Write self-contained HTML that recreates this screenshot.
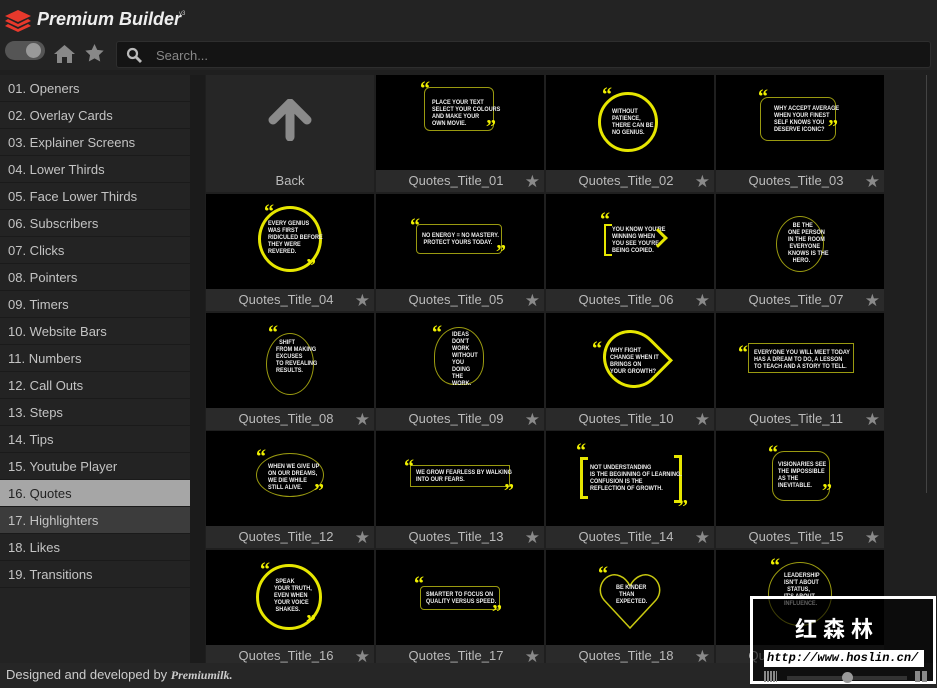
<!DOCTYPE html>
<html><head><meta charset="utf-8"><style>
*{margin:0;padding:0;box-sizing:border-box}
body{width:937px;height:688px;background:#1f1f1f;font-family:"Liberation Sans",sans-serif;position:relative;overflow:hidden;color:#ccc}
.hdr{position:absolute;left:0;top:0;width:937px;height:70px;background:#232323}
.title{position:absolute;left:37px;top:9px;font-size:18px;font-weight:bold;font-style:italic;color:#eee}
.ver{position:absolute;left:179px;top:11px;font-size:6px;color:#ccc}
.tog{position:absolute;left:5px;top:41px;width:40px;height:19px;border-radius:10px;background:#555}
.tog i{position:absolute;right:4px;top:2px;width:15px;height:15px;border-radius:50%;background:#999}
.search{position:absolute;left:116px;top:41px;width:815px;height:27px;background:#141414;border:1px solid #2e2e2e;border-radius:3px}
.search span{position:absolute;left:39px;top:6px;font-size:13px;color:#888}
.side{position:absolute;left:0;top:75px;width:190px;height:588px;background:#232323}
.side div{height:27px;border-bottom:1px solid #1a1a1a;font-size:13px;line-height:27px;padding-left:8px;color:#c4c4c4}
.side .sel{background:#a6a6a6;color:#222}
.side .h{background:#3c3c3c}
.scr{position:absolute;left:190px;top:75px;width:15px;height:588px;background:#1b1b1b}
.cell{position:absolute;width:168px;height:117px;background:#2a2a2a}
.img{position:absolute;left:0;top:0;width:168px;height:95px;background:#000;overflow:hidden}
.lbl{position:absolute;left:0;top:95px;width:168px;height:22px;background:#2a2a2a;font-size:13px;line-height:22px;text-align:center;color:#bbb;padding-right:8px}
.lbl b{position:absolute;right:4px;top:1px;color:#8a8a8a;font-size:17px;font-weight:normal}
.q{position:absolute;font-family:"Liberation Sans Narrow","Liberation Sans",sans-serif;font-weight:bold;font-size:6.5px;line-height:7px;color:#eee;white-space:nowrap;transform:scaleX(.85);transform-origin:left top}
.y{position:absolute;border:2px solid #e6e600}
.yt{position:absolute;border:1px solid #9a9a10}
.m{position:absolute;color:#f0f000;font-weight:bold;font-size:20px;line-height:20px;font-family:"Liberation Serif",serif}
.foot{position:absolute;left:0;top:663px;width:937px;height:25px;background:#262626;font-size:13px;line-height:24px;padding-left:6px;color:#ccc}
.wm{position:absolute;z-index:2}
</style></head><body>
<div class="hdr">
<svg style="position:absolute;left:5px;top:10px" width="26" height="22" viewBox="0 0 26 22"><path d="M13 0L26 6 13 12 0 6Z" fill="#e8392c"/><path d="M3 9L13 14 23 9 26 11 13 17 0 11Z" fill="#e8392c"/><path d="M3 14L13 19 23 14 26 16 13 22 0 16Z" fill="#e8392c"/></svg>
<div class="title">Premium Builder</div><div class="ver">v3</div>
<div class="tog"><i></i></div>
<svg style="position:absolute;left:54px;top:44px" width="21" height="19" viewBox="0 0 21 19"><path d="M10.5 1L0 10h3v9h5v-6h5v6h5v-9h3z" fill="#888"/></svg>
<svg style="position:absolute;left:85px;top:44px" width="19" height="18" viewBox="0 0 24 23"><path d="M12 0l3.5 7.5 8.2 1-6 5.7 1.6 8.1L12 18.3l-7.3 4 1.6-8.1-6-5.7 8.2-1z" fill="#888"/></svg>
<div class="search"><svg style="position:absolute;left:9px;top:5px" width="16" height="16" viewBox="0 0 16 16"><circle cx="6.5" cy="6.5" r="4.5" stroke="#bbb" stroke-width="2.2" fill="none"/><path d="M10 10l5 5" stroke="#bbb" stroke-width="2.8"/></svg><span>Search...</span></div>
</div>
<div class="side">
<div>01. Openers</div><div>02. Overlay Cards</div><div>03. Explainer Screens</div><div>04. Lower Thirds</div><div>05. Face Lower Thirds</div><div>06. Subscribers</div><div>07. Clicks</div><div>08. Pointers</div><div>09. Timers</div><div>10. Website Bars</div><div>11. Numbers</div><div>12. Call Outs</div><div>13. Steps</div><div>14. Tips</div><div>15. Youtube Player</div><div class="sel">16. Quotes</div><div class="h">17. Highlighters</div><div>18. Likes</div><div>19. Transitions</div>
</div>
<div class="scr"></div>
<div style="position:absolute;left:926px;top:75px;width:1px;height:418px;background:#444"></div>

<div class="cell" style="left:206px;top:75px;background:#262626"><svg style="position:absolute;left:62px;top:24px" width="44" height="42" viewBox="0 0 44 42"><path d="M22 4L5 21M22 4L39 21M22 6V38" stroke="#8a8a8a" stroke-width="9" stroke-linecap="round" fill="none"/></svg><div class="lbl" style="background:#262626;padding:0">Back</div></div>
<div class="cell" style="left:376px;top:75px"><div class="img"><div class="yt" style="left:48px;top:12px;width:70px;height:44px;border-radius:6px"></div><div class="m" style="left:44px;top:4px">“</div><div class="m" style="left:110px;top:42px">”</div><div class="q" style="left:56px;top:24px">PLACE YOUR TEXT<br>SELECT YOUR COLOURS<br>AND MAKE YOUR<br>OWN MOVIE.</div></div><div class="lbl">Quotes_Title_01<b>★</b></div></div>
<div class="cell" style="left:546px;top:75px"><div class="img"><div class="y" style="left:52px;top:17px;width:60px;height:60px;border-radius:50%;border-width:3px"></div><div class="m" style="left:56px;top:10px">“</div><div class="q" style="left:66px;top:33px">WITHOUT<br>PATIENCE,<br>THERE CAN BE<br>NO GENIUS.</div></div><div class="lbl">Quotes_Title_02<b>★</b></div></div>
<div class="cell" style="left:716px;top:75px"><div class="img"><div class="yt" style="left:44px;top:22px;width:76px;height:44px;border-radius:8px"></div><div class="m" style="left:42px;top:12px">“</div><div class="m" style="left:112px;top:42px">”</div><div class="q" style="left:58px;top:30px">WHY ACCEPT AVERAGE<br>WHEN YOUR FINEST<br>SELF KNOWS YOU<br>DESERVE ICONIC?</div></div><div class="lbl">Quotes_Title_03<b>★</b></div></div>

<div class="cell" style="left:206px;top:194px"><div class="img"><div class="y" style="left:52px;top:12px;width:64px;height:66px;border-radius:50%;border-width:3px"></div><div class="m" style="left:58px;top:8px">“</div><div class="m" style="left:100px;top:62px">”</div><div class="q" style="left:62px;top:26px">EVERY GENIUS<br>WAS FIRST<br>RIDICULED BEFORE<br>THEY WERE<br>REVERED.</div></div><div class="lbl">Quotes_Title_04<b>★</b></div></div>
<div class="cell" style="left:376px;top:194px"><div class="img"><div class="yt" style="left:40px;top:30px;width:86px;height:30px;border-radius:4px"></div><div class="m" style="left:34px;top:22px">“</div><div class="m" style="left:120px;top:48px">”</div><div class="q" style="left:46px;top:38px">NO ENERGY = NO MASTERY.<br>&nbsp;PROTECT YOURS TODAY.</div></div><div class="lbl">Quotes_Title_05<b>★</b></div></div>
<div class="cell" style="left:546px;top:194px"><div class="img"><div class="y" style="left:58px;top:30px;width:8px;height:32px;border-right:none"></div><div class="m" style="left:54px;top:16px">“</div><div class="q" style="left:66px;top:32px">YOU KNOW YOU'RE<br>WINNING WHEN<br>YOU SEE YOU'RE<br>BEING COPIED.</div><div style="position:absolute;left:105px;top:37px;width:14px;height:14px;border-top:3px solid #e6e600;border-right:3px solid #e6e600;transform:rotate(45deg)"></div></div><div class="lbl">Quotes_Title_06<b>★</b></div></div>
<div class="cell" style="left:716px;top:194px"><div class="img"><div class="yt" style="left:60px;top:22px;width:48px;height:56px;border-radius:50%"></div><div class="q" style="left:72px;top:28px">&nbsp;&nbsp;&nbsp;BE THE<br>ONE PERSON<br>IN THE ROOM<br>&nbsp;EVERYONE<br>KNOWS IS THE<br>&nbsp;&nbsp;&nbsp;HERO.</div></div><div class="lbl">Quotes_Title_07<b>★</b></div></div>

<div class="cell" style="left:206px;top:313px"><div class="img"><div class="yt" style="left:60px;top:20px;width:48px;height:62px;border-radius:50%"></div><div class="m" style="left:62px;top:10px">“</div><div class="q" style="left:70px;top:26px">&nbsp;&nbsp;SHIFT<br>FROM MAKING<br>EXCUSES<br>TO REVEALING<br>RESULTS.</div></div><div class="lbl">Quotes_Title_08<b>★</b></div></div>
<div class="cell" style="left:376px;top:313px"><div class="img"><div class="yt" style="left:58px;top:14px;width:50px;height:58px;border-radius:50% 50% 40% 40%"></div><div class="m" style="left:56px;top:10px">“</div><div class="q" style="left:76px;top:18px">IDEAS<br>DON'T<br>WORK<br>WITHOUT<br>YOU<br>DOING<br>THE<br>WORK.</div></div><div class="lbl">Quotes_Title_09<b>★</b></div></div>
<div class="cell" style="left:546px;top:313px"><div class="img"><div class="y" style="left:56px;top:18px;width:60px;height:56px;border-radius:50% 0 50% 50%;transform:rotate(45deg);border-width:3px"></div><div class="m" style="left:46px;top:26px">“</div><div class="q" style="left:64px;top:34px">WHY FIGHT<br>CHANGE WHEN IT<br>BRINGS ON<br>YOUR GROWTH?</div></div><div class="lbl">Quotes_Title_10<b>★</b></div></div>
<div class="cell" style="left:716px;top:313px"><div class="img"><div class="yt" style="left:32px;top:30px;width:106px;height:30px"></div><div class="m" style="left:22px;top:30px">“</div><div class="q" style="left:38px;top:36px">EVERYONE YOU WILL MEET TODAY<br>HAS A DREAM TO DO, A LESSON<br>TO TEACH AND A STORY TO TELL.</div></div><div class="lbl">Quotes_Title_11<b>★</b></div></div>

<div class="cell" style="left:206px;top:431px"><div class="img"><div class="yt" style="left:50px;top:22px;width:68px;height:44px;border-radius:50%"></div><div class="m" style="left:50px;top:16px">“</div><div class="m" style="left:108px;top:50px">”</div><div class="q" style="left:62px;top:32px">WHEN WE GIVE UP<br>ON OUR DREAMS,<br>WE DIE WHILE<br>STILL ALIVE.</div></div><div class="lbl">Quotes_Title_12<b>★</b></div></div>
<div class="cell" style="left:376px;top:431px"><div class="img"><div class="yt" style="left:34px;top:34px;width:100px;height:22px"></div><div class="m" style="left:28px;top:26px">“</div><div class="m" style="left:128px;top:50px">”</div><div class="q" style="left:40px;top:38px">WE GROW FEARLESS BY WALKING<br>INTO OUR FEARS.</div></div><div class="lbl">Quotes_Title_13<b>★</b></div></div>
<div class="cell" style="left:546px;top:431px"><div class="img"><div class="y" style="left:34px;top:26px;width:8px;height:42px;border-right:none;border-width:3px"></div><div class="y" style="left:128px;top:24px;width:8px;height:48px;border-left:none;border-width:3px"></div><div class="m" style="left:30px;top:10px">“</div><div class="m" style="left:132px;top:66px">”</div><div class="q" style="left:44px;top:33px">NOT UNDERSTANDING<br>IS THE BEGINNING OF LEARNING.<br>CONFUSION IS THE<br>REFLECTION OF GROWTH.</div></div><div class="lbl">Quotes_Title_14<b>★</b></div></div>
<div class="cell" style="left:716px;top:431px"><div class="img"><div class="yt" style="left:56px;top:20px;width:58px;height:50px;border-radius:12px"></div><div class="m" style="left:52px;top:12px">“</div><div class="m" style="left:106px;top:50px">”</div><div class="q" style="left:62px;top:30px">VISIONARIES SEE<br>THE IMPOSSIBLE<br>AS THE<br>INEVITABLE.</div></div><div class="lbl">Quotes_Title_15<b>★</b></div></div>

<div class="cell" style="left:206px;top:550px"><div class="img"><div class="y" style="left:50px;top:14px;width:66px;height:66px;border-radius:50%;border-width:3px"></div><div class="m" style="left:54px;top:10px">“</div><div class="m" style="left:100px;top:62px">”</div><div class="q" style="left:68px;top:28px">&nbsp;SPEAK<br>YOUR TRUTH,<br>EVEN WHEN<br>YOUR VOICE<br>&nbsp;SHAKES.</div></div><div class="lbl">Quotes_Title_16<b>★</b></div></div>
<div class="cell" style="left:376px;top:550px"><div class="img"><div class="yt" style="left:44px;top:36px;width:80px;height:24px;border-radius:4px"></div><div class="m" style="left:38px;top:24px">“</div><div class="m" style="left:116px;top:52px">”</div><div class="q" style="left:50px;top:41px">SMARTER TO FOCUS ON<br>QUALITY VERSUS SPEED.</div></div><div class="lbl">Quotes_Title_17<b>★</b></div></div>
<div class="cell" style="left:546px;top:550px"><div class="img"><svg style="position:absolute;left:52px;top:20px" width="64" height="62" viewBox="0 0 64 62"><path d="M32 58L6 30C-4 18 8 0 22 6c5 2 8 6 10 10 2-4 5-8 10-10 14-6 26 12 16 24z" fill="none" stroke="#c8c810" stroke-width="1.5"/></svg><div class="m" style="left:52px;top:14px">“</div><div class="q" style="left:70px;top:34px">BE KINDER<br>&nbsp;&nbsp;THAN<br>EXPECTED.</div></div><div class="lbl">Quotes_Title_18<b>★</b></div></div>
<div class="cell" style="left:716px;top:550px"><div class="img"><div class="yt" style="left:52px;top:12px;width:64px;height:64px;border-radius:50%"></div><div class="m" style="left:54px;top:6px">“</div><div class="q" style="left:68px;top:22px">LEADERSHIP<br>ISN'T ABOUT<br>&nbsp;&nbsp;STATUS,<br>IT'S ABOUT<br>INFLUENCE.</div></div><div class="lbl">Quotes_Title_19<b>★</b></div></div>

<div class="foot">Designed and developed by <i style="font-family:'Liberation Serif',serif;font-weight:bold;font-size:12px">Premiumilk.</i></div>

<div class="wm" style="left:750px;top:596px;width:186px;height:88px;border:3px solid #fff;background:rgba(0,0,0,.6)"></div>
<div class="wm" style="left:795px;top:612px;font-family:'Noto Sans CJK SC',sans-serif;font-size:22px;font-weight:bold;color:#fff;letter-spacing:6px">红森林</div>
<div class="wm" style="left:764px;top:650px;width:160px;height:17px;background:#fff;color:#000;font-family:'Liberation Mono',monospace;font-style:italic;font-weight:bold;font-size:12px;line-height:17px;padding-left:3px">http://www.hoslin.cn/</div>
<div class="wm" style="left:787px;top:676px;width:120px;height:4px;background:#333"></div>
<div class="wm" style="left:842px;top:672px;width:11px;height:11px;border-radius:50%;background:#999"></div>
<div class="wm" style="left:764px;top:671px;width:13px;height:11px;background:repeating-linear-gradient(90deg,#888 0 2px,transparent 2px 3px)"></div>
<div class="wm" style="left:915px;top:671px;width:12px;height:11px;background:repeating-linear-gradient(90deg,#888 0 5px,transparent 5px 7px)"></div>
</body></html>
